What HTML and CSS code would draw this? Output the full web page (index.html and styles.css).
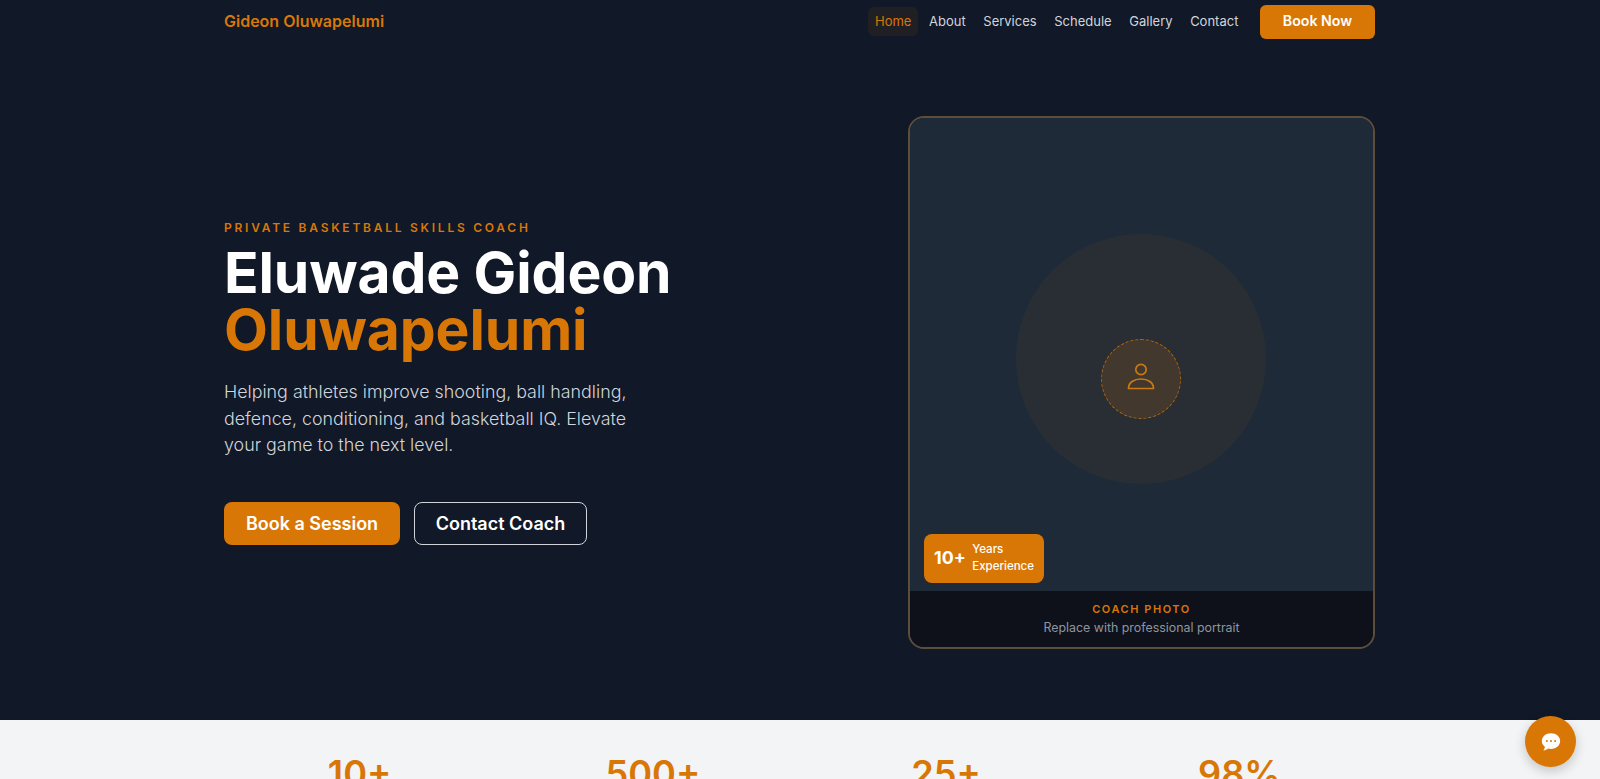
FILE: index.html
```html
<!DOCTYPE html>
<html lang="en">
<head>
<meta charset="utf-8">
<title>Gideon Oluwapelumi</title>
<link rel="stylesheet" href="styles.css">
</head>
<body>
<header class="nav">
  <div class="container nav-inner">
    <a class="logo" href="#">Gideon Oluwapelumi</a>
    <nav class="links">
      <a class="link active" href="#">Home</a>
      <a class="link" href="#">About</a>
      <a class="link" href="#">Services</a>
      <a class="link" href="#">Schedule</a>
      <a class="link" href="#">Gallery</a>
      <a class="link" href="#">Contact</a>
      <a class="nav-cta" href="#">Book Now</a>
    </nav>
  </div>
</header>
<section class="hero">
  <div class="container hero-grid">
    <div class="hero-copy">
      <p class="eyebrow">PRIVATE BASKETBALL SKILLS COACH</p>
      <h1 class="title">Eluwade Gideon <span class="accent">Oluwapelumi</span></h1>
      <p class="lead">Helping athletes improve shooting, ball handling, defence, conditioning, and basketball IQ. Elevate your game to the next level.</p>
      <div class="actions">
        <a class="btn btn-primary" href="#">Book a Session</a>
        <a class="btn btn-outline" href="#">Contact Coach</a>
      </div>
    </div>
    <div class="photo-card">
      <div class="photo">
        <div class="halo"></div>
        <div class="avatar">
          <svg class="avatar-icon" viewBox="0 0 28 28" fill="none" stroke="currentColor" stroke-width="1.7" stroke-linejoin="round">
            <circle cx="14" cy="6.500" r="5.200"/>
            <path d="M1.500 25.500C1.500 19.500 7 16 14 16s12.500 3.500 12.500 9.500z"/>
          </svg>
        </div>
        <div class="badge">
          <span class="badge-num">10+</span>
          <span class="badge-text">Years<br>Experience</span>
        </div>
      </div>
      <div class="caption">
        <p class="caption-title">COACH PHOTO</p>
        <p class="caption-sub">Replace with professional portrait</p>
      </div>
    </div>
  </div>
</section>
<section class="stats">
  <div class="container stats-grid">
    <div class="stat">10+</div>
    <div class="stat">500+</div>
    <div class="stat">25+</div>
    <div class="stat">98%</div>
  </div>
</section>
<a class="chat" href="#" aria-label="Chat">
  <svg class="chat-icon" viewBox="0 0 24 24">
    <path fill="#fff" d="M12 2.500c5.800 0 10 3.700 10 8.500s-4.200 8.500-10 8.500c-1.200 0-2.300-.15-3.300-.45-1.100.95-2.800 1.950-5 2.150.9-1.100 1.500-2.500 1.600-3.900C3.300 15.800 2 13.500 2 11c0-4.800 4.200-8.500 10-8.500z"/>
    <circle cx="7.500" cy="11" r="1.100" fill="#d97706"/>
    <circle cx="12" cy="11" r="1.100" fill="#d97706"/>
    <circle cx="16.500" cy="11" r="1.100" fill="#d97706"/>
  </svg>
</a>
</body>
</html>
```
FILE: styles.css
```css
* { box-sizing: border-box; }
html, body { margin: 0; padding: 0; }
html { overflow: hidden; height: 100%; }
body {
  height: 100%;
  overflow: hidden;
  background: #111827;
  font-family: Inter, "Liberation Sans", sans-serif;
  color: #fff;
}
a { text-decoration: none; color: inherit; }
p, h1 { margin: 0; }

.container { width: 1151px; margin-left: 224px; }

.nav { height: 42px; }
.nav-inner { height: 100%; display: flex; align-items: center; justify-content: space-between; }
.logo { font-size: 16px; font-weight: 600; color: #d97706; }
.links { display: flex; align-items: center; gap: 3.600px; }
.link { padding: 6px 7px; font-size: 13px; line-height: 17px; font-weight: 400; color: #d1d5db; border-radius: 6px; }
.link.active { color: #d97706; background: rgba(217,119,6,0.08); }
.nav-cta {
  margin-left: 11px;
  margin-top: 2px;
  width: 115px;
  height: 34px;
  padding-bottom: 4px;
  display: flex; align-items: center; justify-content: center;
  background: #d97706; color: #fff;
  border-radius: 6px;
  font-size: 14.200px; font-weight: 600;
}

.hero { height: 678px; padding-top: 3px; display: flex; align-items: center; }
.hero-grid { display: flex; justify-content: space-between; align-items: center; }
.hero-copy { width: 552px; }
.eyebrow { font-size: 12px; line-height: 16px; font-weight: 600; letter-spacing: 2.750px; color: #d97706; }
.title { margin-top: 8px; font-size: 57px; line-height: 57px; font-weight: 700; letter-spacing: -0.1px; }
.accent { display: block; color: #d97706; }
.lead { margin-top: 21px; width: 420px; font-size: 17.850px; line-height: 26.500px; font-weight: 300; color: #d1d5db; }
.actions { margin-top: 43px; display: flex; gap: 14px; }
.btn {
  height: 43px; display: flex; align-items: center; justify-content: center;
  border-radius: 8px; font-size: 18px; font-weight: 600; color: #fff;
}
.btn-primary { width: 176px; background: #d97706; }
.btn-outline { width: 173px; border: 1px solid #d1d5db; }

.photo-card {
  width: 467px; height: 533px;
  display: flex; flex-direction: column;
  border: 2px solid #5d4e3b;
  border-radius: 16px;
  overflow: hidden;
}
.photo { flex: 1; position: relative; background: #1e2a38; display: flex; align-items: center; justify-content: center; }
.halo { position: absolute; left: 106px; top: 116px; width: 250px; height: 250px; border-radius: 50%; background: rgba(217,119,6,0.06); }
.avatar {
  position: absolute; left: 191px; top: 221px;
  width: 80px; height: 80px; border-radius: 50%;
  background: rgba(217,119,6,0.14);
  border: 1.500px dashed #b8690f;
  display: flex; align-items: center; justify-content: center;
  color: #c97a14;
}
.avatar-icon { width: 28px; height: 28px; margin-bottom: 4px; }
.badge {
  position: absolute; left: 14px; bottom: 8px;
  display: flex; align-items: center; gap: 6.500px;
  height: 49px; padding: 0 10px 2px 10px;
  background: #d97706; border-radius: 8px;
}
.badge-num { font-size: 17.800px; font-weight: 700; }
.badge-text { font-size: 11.500px; line-height: 17px; font-weight: 500; }
.caption { height: 56px; background: #0e1119; text-align: center; padding-top: 10px; }
.caption-title { font-size: 11px; line-height: 16px; font-weight: 600; letter-spacing: 1.550px; color: #d97706; }
.caption-sub { margin-top: 2px; font-size: 12.400px; line-height: 18px; color: #8f95a0; }

.stats { background: #f3f4f6; height: 140px; padding-top: 34px; }
.stats-grid { display: grid; grid-template-columns: repeat(4, 1fr); gap: 22px; }
.stat { text-align: center; font-size: 36.200px; line-height: 40px; font-weight: 600; color: #d97706; }

.chat {
  position: fixed; right: 24px; bottom: 12px;
  width: 51px; height: 51px; border-radius: 50%;
  background: #d97706;
  display: flex; align-items: center; justify-content: center;
  box-shadow: 0 4px 12px rgba(0,0,0,0.2);
}
.chat-icon { width: 22px; height: 22px; }
```
